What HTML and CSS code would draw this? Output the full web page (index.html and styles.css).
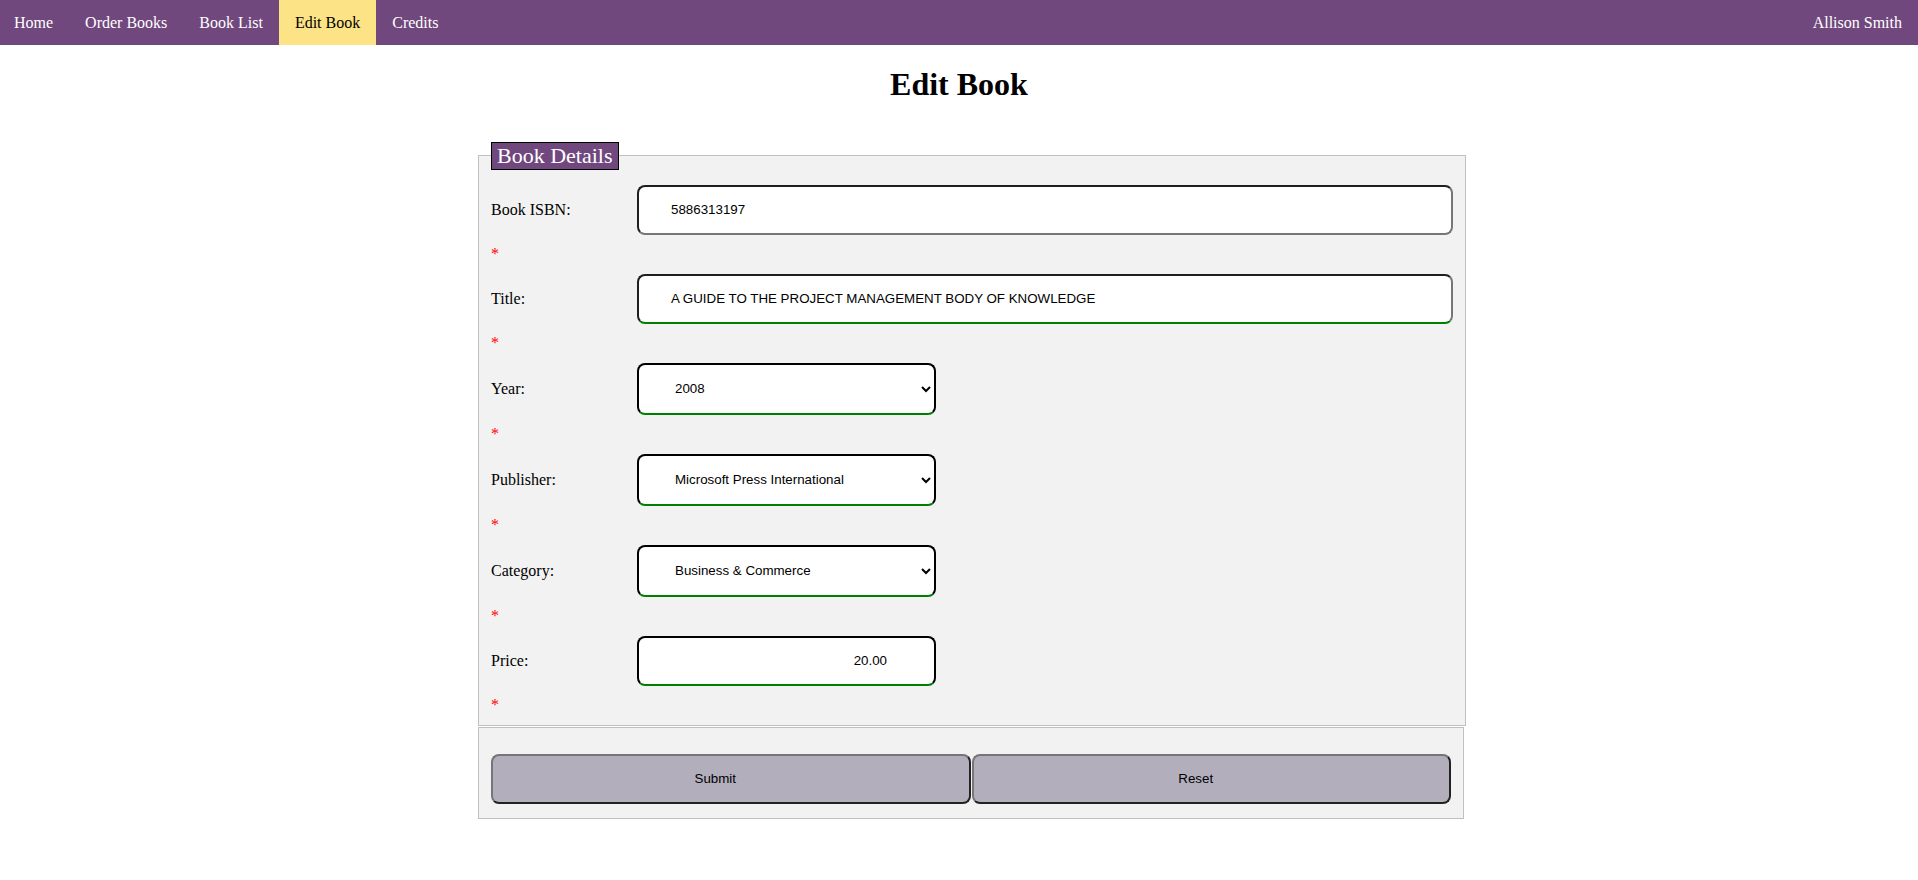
FILE: index.html
```html
<!DOCTYPE html>
<html lang="en">
<head>
<meta charset="utf-8">
<title>Edit Book</title>
<link rel="stylesheet" href="styles.css">
</head>
<body>
<nav class="topnav">
  <ul class="nav-links">
    <li><a href="#">Home</a></li>
    <li><a href="#">Order Books</a></li>
    <li><a href="#">Book List</a></li>
    <li class="active"><a href="#">Edit Book</a></li>
    <li><a href="#">Credits</a></li>
  </ul>
  <div class="nav-user">Allison Smith</div>
</nav>

<h1 class="page-title">Edit Book</h1>

<form class="book-form">
  <fieldset class="details">
    <legend class="details-legend">Book Details</legend>

    <div class="field-row">
      <label class="field-label" for="isbn">Book ISBN:</label>
      <input class="control control-wide control-plain" id="isbn" type="text" value="5886313197">
    </div>
    <span class="error">*</span>

    <div class="field-row">
      <label class="field-label" for="title">Title:</label>
      <input class="control control-wide control-valid" id="title" type="text" value="A GUIDE TO THE PROJECT MANAGEMENT BODY OF KNOWLEDGE">
    </div>
    <span class="error">*</span>

    <div class="field-row">
      <label class="field-label" for="year">Year:</label>
      <select class="control control-select" id="year">
        <option>2008</option>
      </select>
    </div>
    <span class="error">*</span>

    <div class="field-row">
      <label class="field-label" for="publisher">Publisher:</label>
      <select class="control control-select" id="publisher">
        <option>Microsoft Press International</option>
      </select>
    </div>
    <span class="error">*</span>

    <div class="field-row">
      <label class="field-label" for="category">Category:</label>
      <select class="control control-select" id="category">
        <option>Business &amp; Commerce</option>
      </select>
    </div>
    <span class="error">*</span>

    <div class="field-row">
      <label class="field-label" for="price">Price:</label>
      <input class="control control-price" id="price" type="text" inputmode="decimal" value="20.00">
    </div>
    <span class="error">*</span>
  </fieldset>

  <fieldset class="actions">
    <button class="btn" type="submit">Submit</button>
    <button class="btn" type="reset">Reset</button>
  </fieldset>
</form>
</body>
</html>
```

FILE: styles.css
```css
* {
  box-sizing: border-box;
}

body {
  margin: 0;
  font-family: "Liberation Serif", "Times New Roman", serif;
  font-size: 16px;
  color: #000;
  background: #fff;
}

/* ---------- top navigation ---------- */
.topnav {
  display: flex;
  justify-content: space-between;
  align-items: stretch;
  height: 45px;
  background: #70487e;
}

.nav-links {
  display: flex;
  margin: 0 0 0 -2px;
  padding: 0;
  list-style: none;
}

.nav-links li a {
  display: block;
  padding: 0 16px;
  line-height: 45px;
  color: #fff;
  text-decoration: none;
}

.nav-links li.active {
  background: #fce386;
}

.nav-links li.active a {
  color: #000;
}

.nav-user {
  padding: 0 16px;
  line-height: 45px;
  color: #fff;
}

/* ---------- heading ---------- */
.page-title {
  margin: 21.44px 0;
  font-size: 32px;
  font-weight: bold;
  text-align: center;
}

/* ---------- form ---------- */
.book-form {
  width: 986px;
  margin: 38.5px 0 0 478px;
}

.details,
.actions {
  margin: 0;
  width: 986px;
  border: 1px solid #c0c0c0;
  background: #f2f2f2;
}

.details {
  padding: 15px 12px 0;
}

.details-legend {
  padding: 0 5px;
  border: 1px solid #000;
  background: #70487e;
  color: #fff;
  font-size: 22px;
  line-height: 26px;
}

.field-row {
  display: flex;
  align-items: center;
}

.field-label {
  flex: 0 0 146px;
  width: 146px;
}

.control {
  flex-shrink: 0;
  font-family: "Liberation Sans", Arial, sans-serif;
  font-size: 13.33px;
  color: #000;
  background: #fff;
  border-radius: 8px;
  border-width: 2px;
  border-style: solid;
  outline: none;
}

.control-wide {
  width: 816px;
  height: 50px;
  padding: 0 32px;
}

.control-plain {
  border-color: #1f1f1f #767676 #767676 #1f1f1f;
}

.control-valid {
  border-color: #1f1f1f #767676 #008000 #1f1f1f;
}

.control-select {
  width: 299px;
  height: 52px;
  padding: 0 4px 0 32px;
  border-color: #000 #000 #008000 #000;
}

.control-price {
  width: 299px;
  height: 50px;
  padding: 0 47px 0 32px;
  text-align: right;
  border-color: #000 #000 #008000 #000;
}

.error {
  display: block;
  height: 39px;
  padding-top: 10px;
  color: #ff0000;
  font-size: 16px;
  line-height: 18px;
}

/* ---------- actions ---------- */
.actions {
  display: flex;
  gap: 1px;
  margin-top: 1px;
  padding: 26px 12px 14px;
}

.btn {
  flex: 1 1 0;
  height: 50px;
  padding: 0 31px 0 0;
  font-family: "Liberation Sans", Arial, sans-serif;
  font-size: 13.33px;
  color: #000;
  background: #b3aebc;
  border: 2px solid;
  border-color: #767676 #222 #222 #767676;
  border-radius: 8px;
}
```
